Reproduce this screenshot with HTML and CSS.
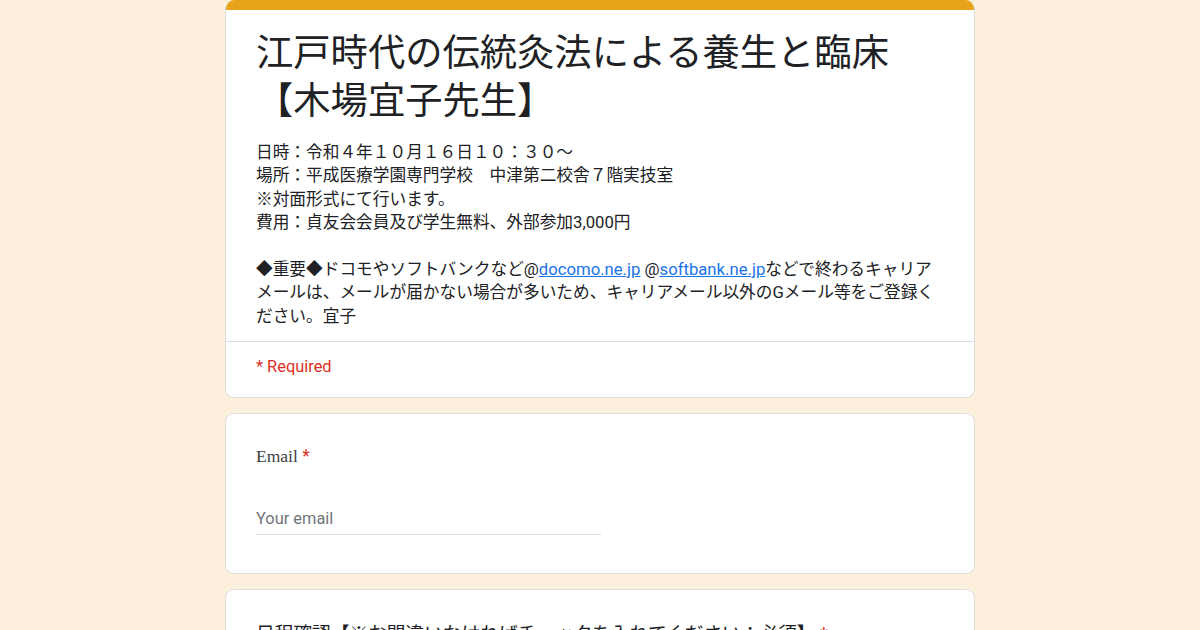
FILE: index.html
```html
<!DOCTYPE html>
<html lang="ja">
<head>
<meta charset="utf-8">
<title>江戸時代の伝統灸法による養生と臨床【木場宜子先生】</title>
<link rel="stylesheet" href="styles.css">
</head>
<body>
<main class="form">
  <section class="card header-card">
    <div class="accent"></div>
    <div class="header-body">
      <h1 class="title">江戸時代の伝統灸法による養生と臨床【木場宜子先生】</h1>
      <div class="desc">
        <p>日時：令和４年１０月１６日１０：３０～<br>場所：平成医療学園専門学校　中津第二校舎７階実技室<br>※対面形式にて行います。<br>費用：貞友会会員及び学生無料、外部参加3,000円</p>
        <p>◆重要◆ドコモやソフトバンクなど@<a href="#">docomo.ne.jp</a> @<a href="#">softbank.ne.jp</a>などで終わるキャリアメールは、メールが届かない場合が多いため、キャリアメール以外のGメール等をご登録ください。宜子</p>
      </div>
    </div>
    <div class="required-note">* Required</div>
  </section>

  <section class="card question">
    <div class="q-label">Email <span class="star">*</span></div>
    <div class="input">Your email</div>
  </section>

  <section class="card question">
    <div class="q-label jp">日程確認【※お間違いなければチェックを入れてください：必須】 <span class="star">*</span></div>
  </section>
</main>
</body>
</html>
```

FILE: styles.css
```css
html, body {
  margin: 0;
  padding: 0;
}
body {
  background: #fcf0dc;
  font-family: Roboto, "Noto Sans CJK JP", sans-serif;
  color: #202124;
  height: 630px;
  overflow: hidden;
}
.form {
  width: 750px;
  margin: 0 auto;
  display: flex;
  flex-direction: column;
  gap: 15px;
}
.card {
  background: #fff;
  border: 1px solid #dadce0;
  border-radius: 9px;
  box-sizing: border-box;
}
.header-card {
  border-top: none;
  overflow: hidden;
}
.accent {
  height: 10px;
  background: #e8a31b;
}
.header-body {
  padding: 16px 30px 13px;
  border-bottom: 1px solid #dadce0;
}
.title {
  margin: 0;
  font-family: "Noto Sans CJK JP", sans-serif;
  font-weight: 400;
  font-size: 37.3px;
  line-height: 48px;
  color: #202124;
}
.desc {
  margin-top: 19px;
  font-size: 16.7px;
  line-height: 23.4px;
}
.desc p {
  margin: 0;
}
.desc p + p {
  margin-top: 23.4px;
}
.desc a {
  color: #1a73e8;
  text-decoration: underline;
}
.required-note {
  padding: 13px 30px 18px;
  color: #d93025;
  font-size: 16.4px;
  line-height: 23.4px;
}
.question {
  padding: 28px 30px 38px;
}
.q-label {
  font-family: "Liberation Serif", serif;
  font-size: 17.5px;
  line-height: 28px;
  color: #3c4043;
}
.q-label.jp {
  font-family: "Noto Sans CJK JP", sans-serif;
  font-size: 18.7px;
  color: #202124;
}
.star {
  color: #d93025;
  font-family: Roboto, sans-serif;
}
.input {
  width: 345px;
  margin-top: 37px;
  padding-bottom: 4px;
  border-bottom: 1px solid #dadce0;
  font-size: 16.4px;
  line-height: 23px;
  color: #70757a;
}
```
